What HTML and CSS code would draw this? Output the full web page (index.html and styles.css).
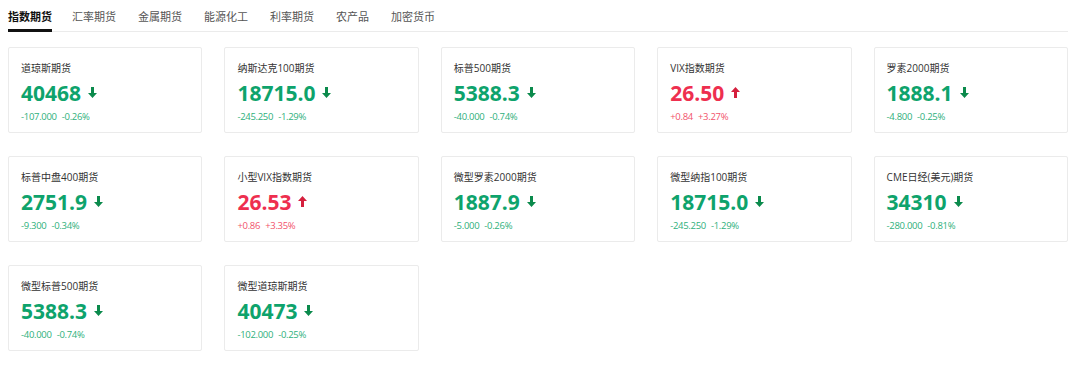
FILE: index.html
```
<!DOCTYPE html>
<html lang="zh-CN">

<head>
  <meta charset="UTF-8">
  <meta name="viewport" content="width=device-width, initial-scale=1.0">
  <title>期货行情</title>
  <link rel="stylesheet" href="styles.css">
</head>

<body>
  <nav class="c-tabs">
    <a class="c-tabs__item is-active" href="#">指数期货</a>
    <a class="c-tabs__item" href="#">汇率期货</a>
    <a class="c-tabs__item" href="#">金属期货</a>
    <a class="c-tabs__item" href="#">能源化工</a>
    <a class="c-tabs__item" href="#">利率期货</a>
    <a class="c-tabs__item" href="#">农产品</a>
    <a class="c-tabs__item" href="#">加密货币</a>
  </nav>

  <main class="c-grid">
    <div class="c-card is-down">
      <p class="c-card__name">道琼斯期货</p>
      <p class="c-card__price">40468 <svg class="c-card__arrow" viewBox="0 0 9 11"><path d="M3 0h3v6h3l-4.5 5L0 6h3z"/></svg></p>
      <p class="c-card__change"><span>-107.000</span><span>-0.26%</span></p>
    </div>
    <div class="c-card is-down">
      <p class="c-card__name">纳斯达克100期货</p>
      <p class="c-card__price">18715.0 <svg class="c-card__arrow" viewBox="0 0 9 11"><path d="M3 0h3v6h3l-4.5 5L0 6h3z"/></svg></p>
      <p class="c-card__change"><span>-245.250</span><span>-1.29%</span></p>
    </div>
    <div class="c-card is-down">
      <p class="c-card__name">标普500期货</p>
      <p class="c-card__price">5388.3 <svg class="c-card__arrow" viewBox="0 0 9 11"><path d="M3 0h3v6h3l-4.5 5L0 6h3z"/></svg></p>
      <p class="c-card__change"><span>-40.000</span><span>-0.74%</span></p>
    </div>
    <div class="c-card is-up">
      <p class="c-card__name">VIX指数期货</p>
      <p class="c-card__price">26.50 <svg class="c-card__arrow" viewBox="0 0 9 11"><path d="M3 11h3V5h3L4.5 0 0 5h3z"/></svg></p>
      <p class="c-card__change"><span>+0.84</span><span>+3.27%</span></p>
    </div>
    <div class="c-card is-down">
      <p class="c-card__name">罗素2000期货</p>
      <p class="c-card__price">1888.1 <svg class="c-card__arrow" viewBox="0 0 9 11"><path d="M3 0h3v6h3l-4.5 5L0 6h3z"/></svg></p>
      <p class="c-card__change"><span>-4.800</span><span>-0.25%</span></p>
    </div>

    <div class="c-card is-down">
      <p class="c-card__name">标普中盘400期货</p>
      <p class="c-card__price">2751.9 <svg class="c-card__arrow" viewBox="0 0 9 11"><path d="M3 0h3v6h3l-4.5 5L0 6h3z"/></svg></p>
      <p class="c-card__change"><span>-9.300</span><span>-0.34%</span></p>
    </div>
    <div class="c-card is-up">
      <p class="c-card__name">小型VIX指数期货</p>
      <p class="c-card__price">26.53 <svg class="c-card__arrow" viewBox="0 0 9 11"><path d="M3 11h3V5h3L4.5 0 0 5h3z"/></svg></p>
      <p class="c-card__change"><span>+0.86</span><span>+3.35%</span></p>
    </div>
    <div class="c-card is-down">
      <p class="c-card__name">微型罗素2000期货</p>
      <p class="c-card__price">1887.9 <svg class="c-card__arrow" viewBox="0 0 9 11"><path d="M3 0h3v6h3l-4.5 5L0 6h3z"/></svg></p>
      <p class="c-card__change"><span>-5.000</span><span>-0.26%</span></p>
    </div>
    <div class="c-card is-down">
      <p class="c-card__name">微型纳指100期货</p>
      <p class="c-card__price">18715.0 <svg class="c-card__arrow" viewBox="0 0 9 11"><path d="M3 0h3v6h3l-4.5 5L0 6h3z"/></svg></p>
      <p class="c-card__change"><span>-245.250</span><span>-1.29%</span></p>
    </div>
    <div class="c-card is-down">
      <p class="c-card__name">CME日经(美元)期货</p>
      <p class="c-card__price">34310 <svg class="c-card__arrow" viewBox="0 0 9 11"><path d="M3 0h3v6h3l-4.5 5L0 6h3z"/></svg></p>
      <p class="c-card__change"><span>-280.000</span><span>-0.81%</span></p>
    </div>

    <div class="c-card is-down">
      <p class="c-card__name">微型标普500期货</p>
      <p class="c-card__price">5388.3 <svg class="c-card__arrow" viewBox="0 0 9 11"><path d="M3 0h3v6h3l-4.5 5L0 6h3z"/></svg></p>
      <p class="c-card__change"><span>-40.000</span><span>-0.74%</span></p>
    </div>
    <div class="c-card is-down">
      <p class="c-card__name">微型道琼斯期货</p>
      <p class="c-card__price">40473 <svg class="c-card__arrow" viewBox="0 0 9 11"><path d="M3 0h3v6h3l-4.5 5L0 6h3z"/></svg></p>
      <p class="c-card__change"><span>-102.000</span><span>-0.25%</span></p>
    </div>
  </main>
</body>

</html>
```

FILE: styles.css
```
*,
*::before,
*::after {
  margin: 0;
  box-sizing: border-box;
}

body {
  margin: 0;
  padding: 8px 12px 8px 8px;
  background: #fff;
  color: #333;
  font-family: "Open Sans", "Noto Sans CJK SC", sans-serif;
}

/* tabs */
.c-tabs {
  display: flex;
  align-items: flex-end;
  gap: 22px;
  border-bottom: 1px solid #ebebeb;
}

.c-tabs__item {
  display: block;
  font-size: 11px;
  line-height: 18px;
  padding-bottom: 3px;
  border-bottom: 3px solid transparent;
  margin-bottom: -1px;
  color: #555;
  text-decoration: none;
}

.c-tabs__item.is-active {
  color: #111;
  font-weight: 700;
  border-bottom-color: #111;
  margin-right: -2px;
}

/* cards */
.c-grid {
  display: grid;
  grid-template-columns: repeat(5, 1fr);
  column-gap: 22px;
  row-gap: 23px;
  margin-top: 15px;
}

.c-card {
  height: 86px;
  padding: 13px 12px 0;
  border: 1px solid #ebebeb;
  border-radius: 2px;
  background: #fff;
}

.c-card__name {
  font-size: 10px;
  line-height: 14px;
  color: #333;
}

.c-card__price {
  display: flex;
  align-items: center;
  gap: 7px;
  margin-top: 5px;
  font-size: 21px;
  line-height: 26px;
  font-weight: 700;
}

.c-card__arrow {
  width: 9px;
  height: 11px;
  margin-top: -2px;
}

.c-card__change {
  display: flex;
  gap: 5px;
  margin-top: 4px;
  font-size: 9.5px;
  letter-spacing: -0.3px;
  line-height: 14px;
}

.c-card.is-down .c-card__price { color: #0ea36c; }
.c-card.is-down .c-card__arrow { fill: #0b8a4c; }
.c-card.is-down .c-card__change { color: #2fb07c; }

.c-card.is-up .c-card__price { color: #ee2f4f; }
.c-card.is-up .c-card__arrow { fill: #d51f3d; }
.c-card.is-up .c-card__change { color: #f2536c; }
```
